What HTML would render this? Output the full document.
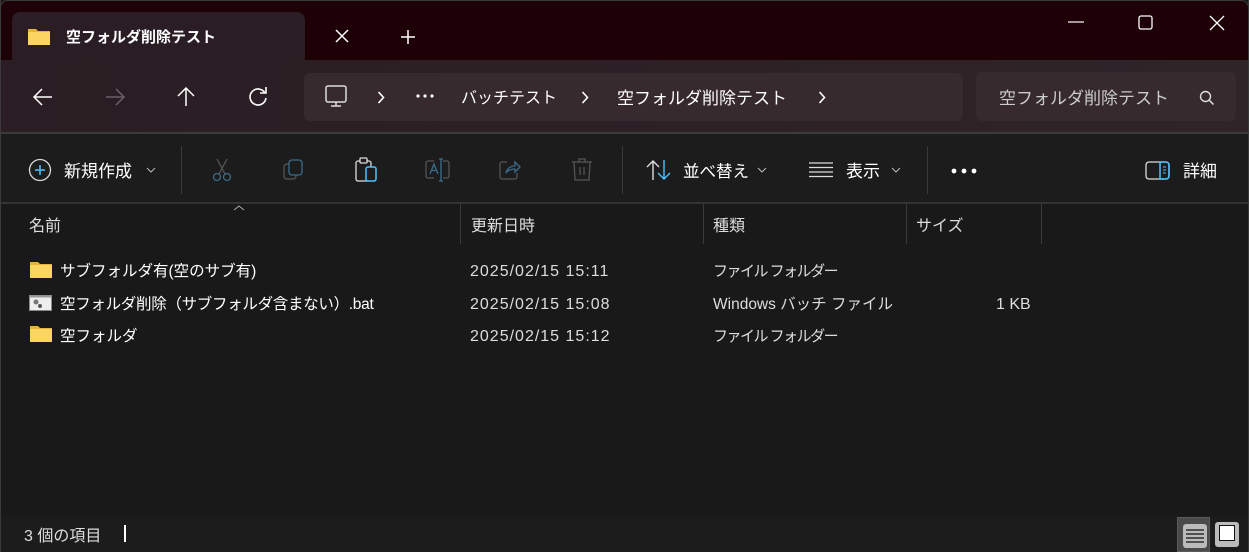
<!DOCTYPE html>
<html><head><meta charset="utf-8"><style>
*{margin:0;padding:0;box-sizing:border-box}
body{width:1249px;height:552px;overflow:hidden;background:#191919;font-family:"Liberation Sans","Noto Sans CJK JP",sans-serif;color:#fff;position:relative}
.abs{position:absolute}
.t{position:absolute;white-space:nowrap;font-size:16px;line-height:20px;height:22px;padding-top:2px}
svg{position:absolute;overflow:visible}
</style></head><body>
<div class="abs" style="left:0;top:0;width:1249px;height:60px;background:#1e0007;border:1px solid #3a3a3a;border-bottom:none;border-radius:8px 8px 0 0"></div>
<div class="abs" style="left:12px;top:12px;width:293px;height:50px;background:#2a1e24;border-radius:8px 8px 0 0"></div>
<div class="abs" style="left:1px;top:60px;width:1247px;height:73px;background:linear-gradient(90deg,#2a1d23,#2f2428)"></div>
<div class="abs" style="left:0;top:132px;width:1249px;height:2px;background:#3b3b3b"></div>
<div class="abs" style="left:1px;top:134px;width:1247px;height:68px;background:#1c1c1c"></div>
<div class="abs" style="left:0;top:202px;width:1249px;height:2px;background:#333"></div>
<div class="abs" style="left:0;top:0;width:1px;height:552px;background:#3a3a3a"></div>
<div class="abs" style="right:0;top:0;width:1px;height:552px;background:#3a3a3a"></div>

<!-- tab -->
<svg style="left:28px;top:27px" width="22" height="18"><path d="M0 2h8l2 2h12v14H0z" fill="#e8b33a"/><rect x="0" y="5" width="22" height="13" fill="#fcd462"/></svg>
<div class="t" style="left:66px;top:26px;font-size:15px;font-weight:bold">空フォルダ削除テスト</div>
<svg style="left:335px;top:29px" width="14" height="14"><path d="M1 1L13 13M13 1L1 13" stroke="#fff" stroke-width="1.5"/></svg>
<svg style="left:400px;top:29px" width="16" height="16"><path d="M8 1V15M1 8H15" stroke="#fff" stroke-width="1.5"/></svg>
<svg style="left:1068px;top:21px" width="16" height="2"><path d="M0 1H16" stroke="#fff" stroke-width="1.2"/></svg>
<svg style="left:1138px;top:15px" width="15" height="15"><rect x="1" y="1" width="13" height="13" rx="2" fill="none" stroke="#fff" stroke-width="1.3"/></svg>
<svg style="left:1209px;top:15px" width="16" height="16"><path d="M1 1L15 15M15 1L1 15" stroke="#fff" stroke-width="1.3"/></svg>

<!-- nav -->
<svg style="left:33px;top:88px" width="20" height="18"><path d="M19 9H2M9 1L1 9L9 17" stroke="#fff" stroke-width="1.5" fill="none"/></svg>
<svg style="left:105px;top:88px" width="20" height="18"><path d="M1 9H18M11 1L19 9L11 17" stroke="#6b5f64" stroke-width="1.5" fill="none"/></svg>
<svg style="left:177px;top:86px" width="18" height="20"><path d="M9 20V2M1 10L9 2L17 10" stroke="#fff" stroke-width="1.5" fill="none"/></svg>
<svg style="left:249px;top:86px" width="20" height="20"><path d="M16 7A8 8 0 1 0 17 12" stroke="#fff" stroke-width="1.6" fill="none"/><path d="M17 1V7H11" stroke="#fff" stroke-width="1.6" fill="none"/></svg>
<div class="abs" style="left:304px;top:73px;width:659px;height:48px;background:#362a2f;border-radius:6px"></div>
<svg style="left:325px;top:85px" width="22" height="22"><rect x="1" y="1" width="20" height="16" rx="2" fill="none" stroke="#ddd" stroke-width="1.5"/><path d="M11 17V21M6 21H16" stroke="#ddd" stroke-width="1.5"/></svg>
<svg style="left:377px;top:91px" width="8" height="13"><path d="M1.5 1L6.5 6.5L1.5 12" stroke="#fff" stroke-width="1.6" fill="none"/></svg>
<svg style="left:416px;top:94px" width="20" height="4"><circle cx="2" cy="2" r="1.6" fill="#fff"/><circle cx="9" cy="2" r="1.6" fill="#fff"/><circle cx="16" cy="2" r="1.6" fill="#fff"/></svg>
<div class="t" style="left:461px;top:87px;font-size:16px">バッチテスト</div>
<svg style="left:581px;top:91px" width="8" height="13"><path d="M1.5 1L6.5 6.5L1.5 12" stroke="#fff" stroke-width="1.6" fill="none"/></svg>
<div class="t" style="left:617px;top:87px;font-size:17px">空フォルダ削除テスト</div>
<svg style="left:818px;top:91px" width="8" height="13"><path d="M1.5 1L6.5 6.5L1.5 12" stroke="#fff" stroke-width="1.6" fill="none"/></svg>
<div class="abs" style="left:976px;top:72px;width:260px;height:49px;border-radius:6px;overflow:hidden;background:#362a2f"><div class="t" style="left:23px;top:15px;font-size:17px;color:#ccc">空フォルダ削除テスト</div></div>
<svg style="left:1199px;top:90px" width="16" height="16"><circle cx="6.5" cy="6.5" r="5" fill="none" stroke="#ddd" stroke-width="1.4"/><path d="M10 10L14.5 14.5" stroke="#ddd" stroke-width="1.5"/></svg>

<!-- toolbar -->
<svg style="left:28px;top:158px" width="24" height="24"><circle cx="12" cy="12" r="10.5" fill="none" stroke="#ddd" stroke-width="1.3"/><path d="M12 7V17M7 12H17" stroke="#4cc2ff" stroke-width="1.5"/></svg>
<div class="t" style="left:64px;top:160px;font-size:17px">新規作成</div>
<svg style="left:146px;top:167px" width="10" height="6"><path d="M1 1L5 5L9 1" stroke="#bbb" fill="none"/></svg>
<div class="abs" style="left:181px;top:146px;width:1px;height:48px;background:#3a3a3a"></div>
<svg style="left:210px;top:158px" width="24" height="24"><path d="M7 1L15 16M17 1L9 16" stroke="#555" stroke-width="1.3"/><circle cx="7" cy="19" r="3.5" fill="none" stroke="#3b6c8a" stroke-width="1.3"/><circle cx="17" cy="19" r="3.5" fill="none" stroke="#3b6c8a" stroke-width="1.3"/></svg>
<svg style="left:283px;top:159px" width="22" height="22"><rect x="1" y="5" width="12" height="15" rx="3" fill="none" stroke="#555" stroke-width="1.3"/><rect x="6" y="1" width="13" height="15" rx="3" fill="#1c1c1c" stroke="#3b6c8a" stroke-width="1.3"/></svg>
<svg style="left:355px;top:157px" width="24" height="26"><rect x="1" y="4" width="15" height="20" rx="2" fill="none" stroke="#ddd" stroke-width="1.3"/><rect x="5" y="1" width="7" height="5" rx="1" fill="#1c1c1c" stroke="#ddd" stroke-width="1.3"/><rect x="11" y="10" width="10" height="14" rx="2" fill="#1c1c1c" stroke="#4cc2ff" stroke-width="1.5"/></svg>
<svg style="left:425px;top:158px" width="26" height="24"><path d="M9 3H3a2 2 0 0 0-2 2v13a2 2 0 0 0 2 2h6M18 3h4a2 2 0 0 1 2 2v13a2 2 0 0 1-2 2h-4" stroke="#555" fill="none" stroke-width="1.3"/><path d="M5 16L9 6L13 16M6.5 12.5H11.5" stroke="#3b6c8a" fill="none" stroke-width="1.3"/><path d="M16 1V23M14 1H18M14 23H18" stroke="#3b6c8a" stroke-width="1.3"/></svg>
<svg style="left:498px;top:158px" width="24" height="24"><path d="M9 4H4a2 2 0 0 0-2 2v13a2 2 0 0 0 2 2h13a2 2 0 0 0 2-2v-4" stroke="#555" fill="none" stroke-width="1.3"/><path d="M8 15C9 10 13 8 17 8V4L22 9L17 14V11C13 11 10 12 8 15Z" stroke="#3b6c8a" fill="none" stroke-width="1.3"/></svg>
<svg style="left:571px;top:158px" width="22" height="24"><path d="M1 4H21M8 4V1H14V4M3 4L4 22H18L19 4M9 9V17M13 9V17" stroke="#555" fill="none" stroke-width="1.3"/></svg>
<div class="abs" style="left:622px;top:146px;width:1px;height:48px;background:#3a3a3a"></div>
<svg style="left:646px;top:159px" width="26" height="22"><path d="M7 21V2M1 8L7 2L13 8" stroke="#ddd" stroke-width="1.4" fill="none"/><path d="M18 1V20M12 14L18 20L24 14" stroke="#4cc2ff" stroke-width="1.4" fill="none"/></svg>
<div class="t" style="left:683px;top:160px;font-size:16.5px">並べ替え</div>
<svg style="left:757px;top:167px" width="10" height="6"><path d="M1 1L5 5L9 1" stroke="#bbb" fill="none"/></svg>
<svg style="left:809px;top:162px" width="24" height="16"><path d="M0 1H24M0 5.5H24M0 10H24M0 14.5H24" stroke="#ddd" stroke-width="1.3"/></svg>
<div class="t" style="left:846px;top:160px;font-size:17px">表示</div>
<svg style="left:891px;top:167px" width="10" height="6"><path d="M1 1L5 5L9 1" stroke="#bbb" fill="none"/></svg>
<div class="abs" style="left:927px;top:146px;width:1px;height:48px;background:#3a3a3a"></div>
<svg style="left:951px;top:168px" width="26" height="6"><circle cx="3" cy="3" r="2.4" fill="#fff"/><circle cx="13" cy="3" r="2.4" fill="#fff"/><circle cx="23" cy="3" r="2.4" fill="#fff"/></svg>
<svg style="left:1145px;top:161px" width="26" height="19"><rect x="1" y="1" width="23" height="17" rx="3" fill="none" stroke="#ddd" stroke-width="1.3"/><path d="M15 1H21a3 3 0 0 1 3 3V15a3 3 0 0 1-3 3H15Z" fill="none" stroke="#4cc2ff" stroke-width="1.5"/><path d="M18 6H21M18 9H21M18 12H21" stroke="#4cc2ff"/></svg>
<div class="t" style="left:1183px;top:160px;font-size:17px">詳細</div>

<!-- headers -->
<svg style="left:233px;top:205px" width="12" height="6"><path d="M1 5L6 1L11 5" stroke="#aaa" fill="none"/></svg>
<div class="t" style="left:29px;top:215px;color:#ddd">名前</div>
<div class="abs" style="left:460px;top:204px;width:1px;height:40px;background:#3a3a3a"></div>
<div class="t" style="left:471px;top:215px;color:#ddd">更新日時</div>
<div class="abs" style="left:703px;top:204px;width:1px;height:40px;background:#3a3a3a"></div>
<div class="t" style="left:713px;top:215px;color:#ddd">種類</div>
<div class="abs" style="left:906px;top:204px;width:1px;height:40px;background:#3a3a3a"></div>
<div class="t" style="left:916px;top:215px;color:#ddd">サイズ</div>
<div class="abs" style="left:1041px;top:204px;width:1px;height:40px;background:#3a3a3a"></div>

<!-- rows -->
<svg style="left:30px;top:262px" width="22" height="16"><path d="M0 0h8l2 2h12v14H0z" fill="#e8b33a"/><rect x="0" y="3" width="22" height="13" fill="#fcd462"/></svg>
<div class="t" style="left:60px;top:260px;font-size:15.5px">サブフォルダ有(空のサブ有)</div>
<div class="t" style="left:470px;top:260px;color:#ddd;letter-spacing:1px">2025/02/15 15:11</div>
<div class="t" style="left:713px;top:260px;color:#ddd;font-size:15px;letter-spacing:-1.5px">ファイル フォルダー</div>

<svg style="left:29px;top:295px" width="23" height="16"><rect x="0.5" y="0.5" width="22" height="15" fill="#eee" stroke="#888"/><rect x="0.5" y="0.5" width="22" height="2" fill="#999"/><circle cx="7" cy="7" r="2.5" fill="#777"/><circle cx="11" cy="11" r="2" fill="#555"/></svg>
<div class="t" style="left:60px;top:293px;font-size:15.5px;letter-spacing:-0.3px">空フォルダ削除（サブフォルダ含まない）.bat</div>
<div class="t" style="left:470px;top:293px;color:#ddd;letter-spacing:1px">2025/02/15 15:08</div>
<div class="t" style="left:713px;top:293px;color:#ddd;font-size:15.5px">Windows バッチ ファイル</div>
<div class="t" style="left:996px;top:293px;color:#ddd">1 KB</div>

<svg style="left:30px;top:326px" width="22" height="16"><path d="M0 0h8l2 2h12v14H0z" fill="#e8b33a"/><rect x="0" y="3" width="22" height="13" fill="#fcd462"/></svg>
<div class="t" style="left:60px;top:325px;font-size:15.5px">空フォルダ</div>
<div class="t" style="left:470px;top:325px;color:#ddd;letter-spacing:1px">2025/02/15 15:12</div>
<div class="t" style="left:713px;top:325px;color:#ddd;font-size:15px;letter-spacing:-1.5px">ファイル フォルダー</div>

<!-- status -->
<div class="abs" style="left:1px;top:516px;width:1247px;height:36px;background:#1c1c1c"></div>
<div class="t" style="left:24px;top:525px;color:#ddd">3 個の項目</div>
<div class="abs" style="left:124px;top:525px;width:2px;height:17px;background:#fff"></div>
<div class="abs" style="left:1177px;top:517px;width:33px;height:35px;background:#4a4a4a;border:1px solid #5a5a5a"></div>
<div class="abs" style="left:1183px;top:524px;width:24px;height:24px;background:#bbb;border-radius:3px"></div>
<svg style="left:1186px;top:529px" width="18" height="14"><path d="M0 1H18M0 5H18M0 9H18M0 13H18" stroke="#111" stroke-width="1.3"/></svg>
<div class="abs" style="left:1215px;top:522px;width:24px;height:25px;background:#bbb;border-radius:3px"></div>
<div class="abs" style="left:1219px;top:525px;width:16px;height:16px;background:#fff;border:1.5px solid #111"></div>
</body></html>
